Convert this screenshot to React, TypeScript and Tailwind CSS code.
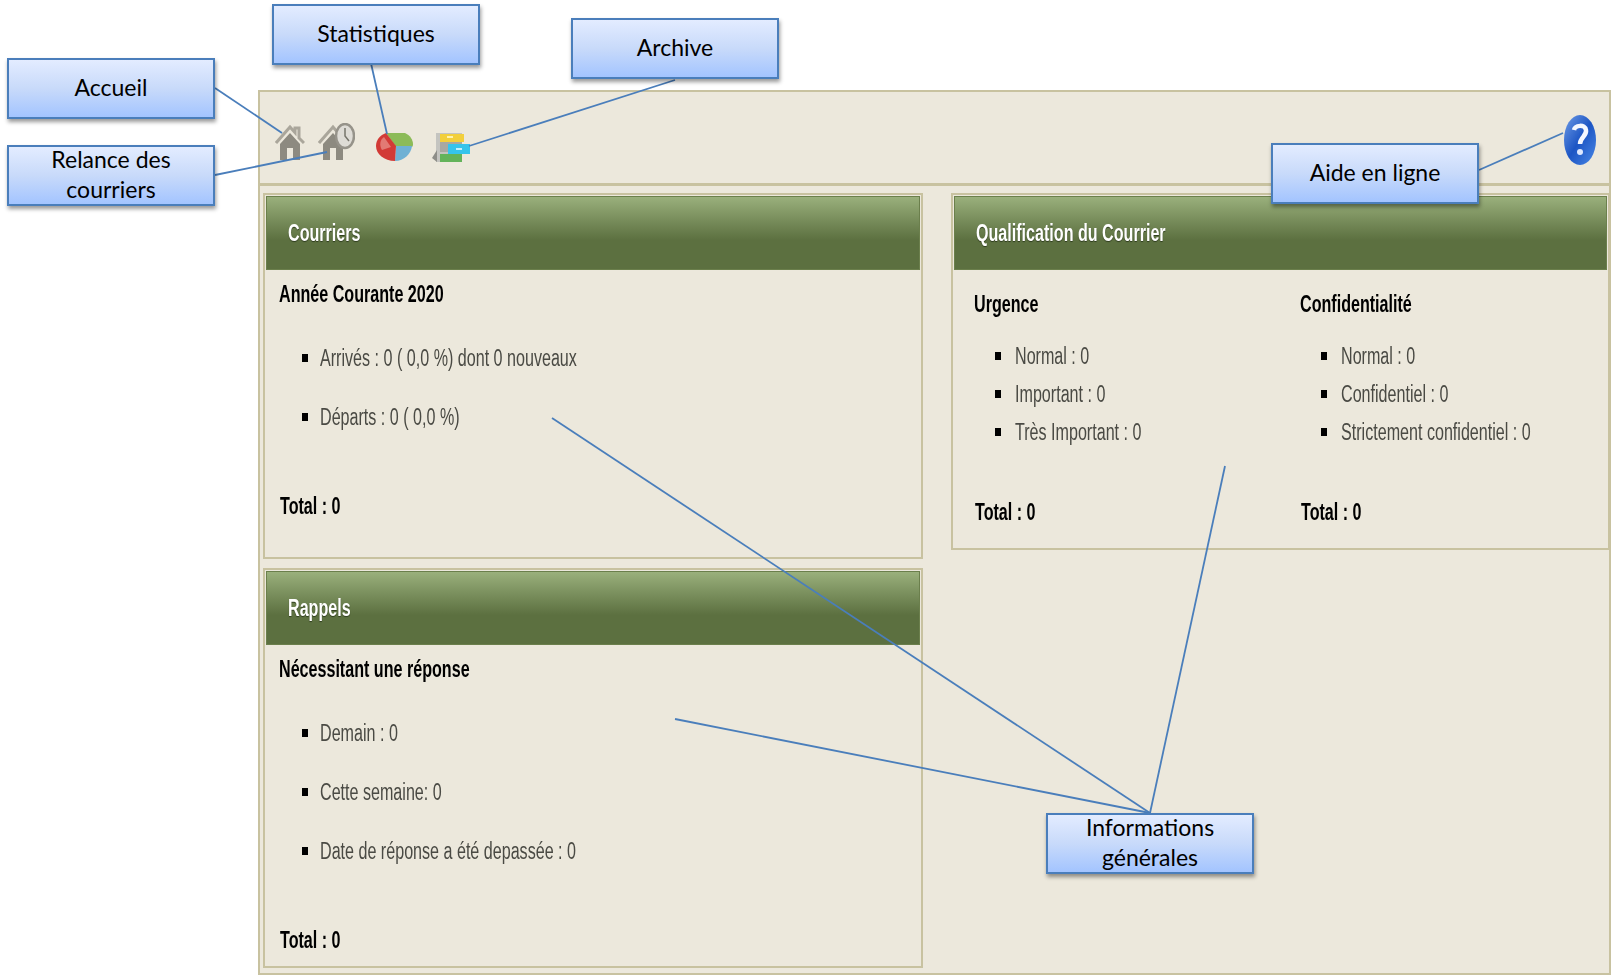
import type { ReactNode } from "react";

function Squeezed({ className, children }: { className?: string; children: ReactNode }) {
  return (
    <span className={`inline-block origin-left scale-x-[.7] whitespace-nowrap blur-[0.3px] ${className ?? ""}`}>
      {children}
    </span>
  );
}

function Item({ children, gap }: { children: ReactNode; gap: string }) {
  return (
    <li className={`flex h-6 items-center ${gap}`}>
      <span className="h-2 w-[6px] shrink-0 bg-black" />
      <Squeezed className="text-[23px] leading-6 text-[#4a4a44]">{children}</Squeezed>
    </li>
  );
}

function Bold({ children }: { children: ReactNode }) {
  return <Squeezed className="text-[23px] leading-6 font-bold text-black">{children}</Squeezed>;
}

function Panel({ title, className, children }: { title: string; className: string; children: ReactNode }) {
  return (
    <section className={`flex shrink-0 flex-col border-2 border-[#c8c2a0] p-px ${className}`}>
      <div className="flex h-[74px] shrink-0 items-center border border-[#6b7f4c] bg-gradient-to-b from-[#9ab07c] via-[#5c7040] via-60% to-[#5c7040] pl-[21px]">
        <Squeezed className="text-[23px] font-bold text-white [text-shadow:0_1px_1px_#2f3d1e]">{title}</Squeezed>
      </div>
      {children}
    </section>
  );
}

function SimpleBody({ heading, items, total }: { heading: string; items: string[]; total: string }) {
  return (
    <div className="flex flex-1 flex-col pt-3 pl-[13px]">
      <Bold>{heading}</Bold>
      <ul className="mt-10 flex flex-col gap-[35px] pl-[23px]">
        {items.map((i) => (
          <Item key={i} gap="gap-[12px]">
            {i}
          </Item>
        ))}
      </ul>
      <div className="mt-[65px] pl-px">
        <Bold>{total}</Bold>
      </div>
    </div>
  );
}

function QualifColumn({ heading, items }: { heading: string; items: string[] }) {
  return (
    <div className="flex w-[326px] shrink-0 flex-col">
      <Bold>{heading}</Bold>
      <ul className="mt-7 flex flex-col gap-[14px] pl-[21px]">
        {items.map((i) => (
          <Item key={i} gap="gap-[14px]">
            {i}
          </Item>
        ))}
      </ul>
      <div className="mt-14 pl-px">
        <Bold>Total : 0</Bold>
      </div>
    </div>
  );
}

function HomeIcon({ className }: { className?: string }) {
  return (
    <svg viewBox="0 0 30 38" className={className}>
      <path d="M1 20 15 4l5 5.500V5h4v10l5 5" fill="none" stroke="#aaa69b" strokeWidth="3" />
      <path d="M5 21 15 10l10 11v16h-7V25h-6v12H5z" fill="#8d8a80" />
    </svg>
  );
}

function HomeClockIcon({ className }: { className?: string }) {
  return (
    <svg viewBox="0 0 37 38" className={className}>
      <path d="M1 20 15 4l14 16" fill="none" stroke="#aaa69b" strokeWidth="3" />
      <path d="M5 21 15 10l10 11v16h-7V25h-6v12H5z" fill="#8d8a80" />
      <ellipse cx="27" cy="13" rx="9" ry="12" fill="#dedcd6" stroke="#96938a" strokeWidth="2.500" />
      <path d="M27 5v8l4 5" fill="none" stroke="#77756c" strokeWidth="1.500" />
    </svg>
  );
}

function PieIcon({ className }: { className?: string }) {
  return (
    <svg viewBox="0 0 37 29" className={className}>
      <path d="M10 0h19c5 2 8 7 8 11 0 1 0 2-1 3H20z" fill="#8cbb58" />
      <path d="M20 13h16c-1 8-8 15-17 15z" fill="#6fb1d4" />
      <path d="M10 0 20 13l-1 15C8 28 0 21 0 13 0 7 4 2 10 0z" fill="#d23a36" />
      <path d="M8 4 15 14l-9 3C3 12 4 7 8 4z" fill="#e27a74" />
    </svg>
  );
}

function ArchiveIcon({ className }: { className?: string }) {
  return (
    <svg viewBox="0 0 38 30" className={className}>
      <path d="M4 0h26v29H4z" fill="#c4c4c0" />
      <path d="M8 1h24v8H8z" fill="#f2cf3c" />
      <path d="M15 3h6v2h-6z" fill="#fff2b0" />
      <path d="M8 9h22v10H8z" fill="#a8a8a2" />
      <path d="M16 11h22v10H16z" fill="#35c4ec" />
      <path d="M24 15h6v2h-6z" fill="#c4f0fb" />
      <path d="M8 21h22v8H8z" fill="#63b35a" />
      <path d="M0 25 5 17v12z" fill="#8e8e88" />
    </svg>
  );
}

function HelpIcon({ className }: { className?: string }) {
  return (
    <svg viewBox="0 0 32 50" className={className}>
      <defs>
        <linearGradient id="helpBlue" x1="0" y1="0" x2="1" y2="1">
          <stop offset="0" stopColor="#6f9ce6" />
          <stop offset="0.5" stopColor="#1c55c4" />
          <stop offset="1" stopColor="#4a88e6" />
        </linearGradient>
      </defs>
      <ellipse cx="16" cy="25" rx="16" ry="25" fill="url(#helpBlue)" />
      <path d="M10 15c1-5 11-6 12 0 1 6-6 7-6 14" fill="none" stroke="#f4f7ff" strokeWidth="4.500" />
      <circle cx="16" cy="37" r="3" fill="#dfe9ff" />
    </svg>
  );
}

const callouts = [
  { label: "Accueil", pos: "left-[7px] top-[58px]" },
  { label: "Relance des courriers", pos: "left-[7px] top-[145px]" },
  { label: "Statistiques", pos: "left-[272px] top-[4px]" },
  { label: "Archive", pos: "left-[571px] top-[18px]" },
  { label: "Aide en ligne", pos: "left-[1271px] top-[143px]" },
  { label: "Informations générales", pos: "left-[1046px] top-[813px]" },
];

const leaders = [
  [215, 88, 282, 133],
  [215, 175, 327, 152],
  [370, 59, 387, 134],
  [675, 80, 469, 146],
  [1479, 170, 1563, 133],
  [1150, 813, 552, 418],
  [1150, 813, 675, 719],
  [1150, 813, 1225, 466],
];

export default function App() {
  return (
    <div className="relative h-[978px] w-[1615px] overflow-hidden bg-white font-['Liberation_Sans',Arial,sans-serif]">
      <div className="pt-[90px] pl-[258px]">
        <div className="h-[885px] w-[1353px] border-2 border-[#c8c2a0] bg-[#ece8dc]">
          <div className="flex h-[94px] items-start border-b-[3px] border-[#c8c2a0] pt-[31px] pl-[15px]">
            <HomeIcon className="h-[38px] w-[30px] blur-[0.7px]" />
            <HomeClockIcon className="ml-[13px] h-[38px] w-[37px] blur-[0.7px]" />
            <PieIcon className="mt-[10px] ml-[21px] h-[29px] w-[37px] blur-[0.7px]" />
            <ArchiveIcon className="mt-[10px] ml-[19px] h-[30px] w-[38px] blur-[0.7px]" />
            <HelpIcon className="mt-[-8px] mr-[13px] ml-auto h-[50px] w-[32px] blur-[0.3px]" />
          </div>
          <div className="flex gap-[28px] pt-[7px] pl-[3px]">
            <div className="flex w-[660px] shrink-0 flex-col gap-[9px]">
              <Panel title="Courriers" className="h-[366px]">
                <SimpleBody
                  heading="Année Courante 2020"
                  items={["Arrivés : 0 ( 0,0 %) dont 0 nouveaux", "Départs : 0 ( 0,0 %)"]}
                  total="Total : 0"
                />
              </Panel>
              <Panel title="Rappels" className="h-[400px]">
                <SimpleBody
                  heading="Nécessitant une réponse"
                  items={["Demain : 0", "Cette semaine: 0", "Date de réponse a été depassée : 0"]}
                  total="Total : 0"
                />
              </Panel>
            </div>
            <Panel title="Qualification du Courrier" className="h-[357px] w-[659px]">
              <div className="flex flex-1 pt-[22px] pl-[20px]">
                <QualifColumn heading="Urgence" items={["Normal : 0", "Important : 0", "Très Important : 0"]} />
                <QualifColumn
                  heading="Confidentialité"
                  items={["Normal : 0", "Confidentiel : 0", "Strictement confidentiel : 0"]}
                />
              </div>
            </Panel>
          </div>
        </div>
      </div>

      {/* annotation layer drawn over the screenshot */}
      <svg className="pointer-events-none absolute inset-0" width="1615" height="978">
        {leaders.map(([x1, y1, x2, y2], i) => (
          <line key={i} x1={x1} y1={y1} x2={x2} y2={y2} stroke="#4a7ebb" strokeWidth="1.800" />
        ))}
      </svg>
      {callouts.map((c) => (
        <div
          key={c.label}
          className={`absolute ${c.pos} flex h-[61px] w-[208px] items-center justify-center border-2 border-[#4a7ebb] bg-gradient-to-b from-[#e3ecff] via-[#c8dafa] to-[#a3c4ff] px-6 pb-[3px] text-center font-['Lato',sans-serif] text-[23px] leading-[30px] text-black shadow-[1px_3px_4px_rgba(0,0,0,0.4)]`}
        >
          {c.label}
        </div>
      ))}
    </div>
  );
}
